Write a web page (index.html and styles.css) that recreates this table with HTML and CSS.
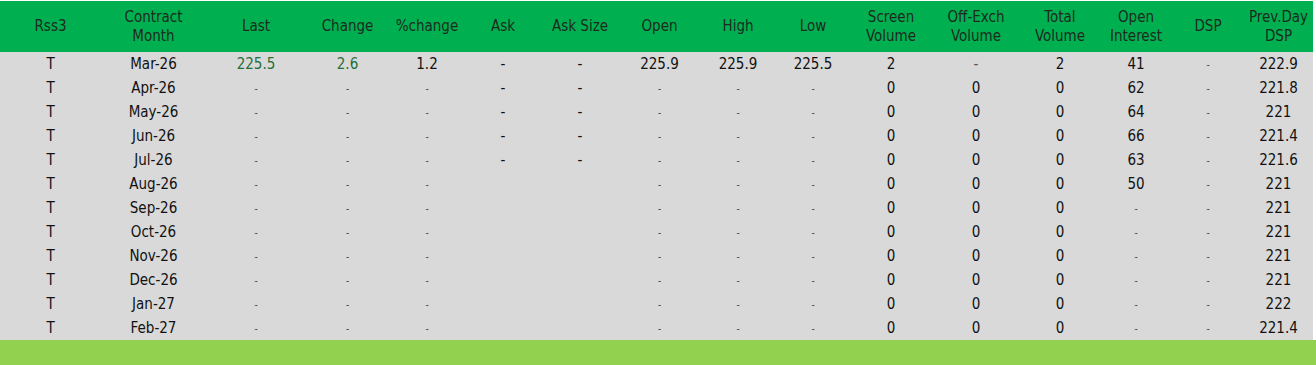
FILE: index.html
```html
<!DOCTYPE html>
<html>
<head>
<meta charset="utf-8">
<link rel="stylesheet" href="styles.css">
</head>
<body>
<div class="board">
<table class="quotes">
<colgroup>
<col style="width:101px"><col style="width:105px"><col style="width:100px"><col style="width:83px"><col style="width:76px"><col style="width:76px"><col style="width:78px"><col style="width:81px"><col style="width:76px"><col style="width:74px"><col style="width:82px"><col style="width:88px"><col style="width:80px"><col style="width:72px"><col style="width:72px"><col style="width:69px">
</colgroup>
<thead>
<tr>
<th>Rss3</th><th>Contract<br>Month</th><th>Last</th><th>Change</th><th>%change</th><th>Ask</th><th>Ask Size</th><th>Open</th><th>High</th><th>Low</th><th>Screen<br>Volume</th><th>Off-Exch<br>Volume</th><th>Total<br>Volume</th><th>Open<br>Interest</th><th>DSP</th><th>Prev.Day<br>DSP</th>
</tr>
</thead>
<tbody>
<tr><td>T</td><td>Mar-26</td><td class="up">225.5</td><td class="up">2.6</td><td>1.2</td><td>-</td><td>-</td><td>225.9</td><td>225.9</td><td>225.5</td><td>2</td><td class="dim">-</td><td>2</td><td>41</td><td><span class="nil">-</span></td><td>222.9</td></tr>
<tr><td>T</td><td>Apr-26</td><td><span class="nil">-</span></td><td><span class="nil">-</span></td><td><span class="nil">-</span></td><td>-</td><td>-</td><td><span class="nil">-</span></td><td><span class="nil">-</span></td><td><span class="nil">-</span></td><td>0</td><td>0</td><td>0</td><td>62</td><td><span class="nil">-</span></td><td>221.8</td></tr>
<tr><td>T</td><td>May-26</td><td><span class="nil">-</span></td><td><span class="nil">-</span></td><td><span class="nil">-</span></td><td>-</td><td>-</td><td><span class="nil">-</span></td><td><span class="nil">-</span></td><td><span class="nil">-</span></td><td>0</td><td>0</td><td>0</td><td>64</td><td><span class="nil">-</span></td><td>221</td></tr>
<tr><td>T</td><td>Jun-26</td><td><span class="nil">-</span></td><td><span class="nil">-</span></td><td><span class="nil">-</span></td><td>-</td><td>-</td><td><span class="nil">-</span></td><td><span class="nil">-</span></td><td><span class="nil">-</span></td><td>0</td><td>0</td><td>0</td><td>66</td><td><span class="nil">-</span></td><td>221.4</td></tr>
<tr><td>T</td><td>Jul-26</td><td><span class="nil">-</span></td><td><span class="nil">-</span></td><td><span class="nil">-</span></td><td>-</td><td>-</td><td><span class="nil">-</span></td><td><span class="nil">-</span></td><td><span class="nil">-</span></td><td>0</td><td>0</td><td>0</td><td>63</td><td><span class="nil">-</span></td><td>221.6</td></tr>
<tr><td>T</td><td>Aug-26</td><td><span class="nil">-</span></td><td><span class="nil">-</span></td><td><span class="nil">-</span></td><td></td><td></td><td><span class="nil">-</span></td><td><span class="nil">-</span></td><td><span class="nil">-</span></td><td>0</td><td>0</td><td>0</td><td>50</td><td><span class="nil">-</span></td><td>221</td></tr>
<tr><td>T</td><td>Sep-26</td><td><span class="nil">-</span></td><td><span class="nil">-</span></td><td><span class="nil">-</span></td><td></td><td></td><td><span class="nil">-</span></td><td><span class="nil">-</span></td><td><span class="nil">-</span></td><td>0</td><td>0</td><td>0</td><td><span class="nil">-</span></td><td><span class="nil">-</span></td><td>221</td></tr>
<tr><td>T</td><td>Oct-26</td><td><span class="nil">-</span></td><td><span class="nil">-</span></td><td><span class="nil">-</span></td><td></td><td></td><td><span class="nil">-</span></td><td><span class="nil">-</span></td><td><span class="nil">-</span></td><td>0</td><td>0</td><td>0</td><td><span class="nil">-</span></td><td><span class="nil">-</span></td><td>221</td></tr>
<tr><td>T</td><td>Nov-26</td><td><span class="nil">-</span></td><td><span class="nil">-</span></td><td><span class="nil">-</span></td><td></td><td></td><td><span class="nil">-</span></td><td><span class="nil">-</span></td><td><span class="nil">-</span></td><td>0</td><td>0</td><td>0</td><td><span class="nil">-</span></td><td><span class="nil">-</span></td><td>221</td></tr>
<tr><td>T</td><td>Dec-26</td><td><span class="nil">-</span></td><td><span class="nil">-</span></td><td><span class="nil">-</span></td><td></td><td></td><td><span class="nil">-</span></td><td><span class="nil">-</span></td><td><span class="nil">-</span></td><td>0</td><td>0</td><td>0</td><td><span class="nil">-</span></td><td><span class="nil">-</span></td><td>221</td></tr>
<tr><td>T</td><td>Jan-27</td><td><span class="nil">-</span></td><td><span class="nil">-</span></td><td><span class="nil">-</span></td><td></td><td></td><td><span class="nil">-</span></td><td><span class="nil">-</span></td><td><span class="nil">-</span></td><td>0</td><td>0</td><td>0</td><td><span class="nil">-</span></td><td><span class="nil">-</span></td><td>222</td></tr>
<tr><td>T</td><td>Feb-27</td><td><span class="nil">-</span></td><td><span class="nil">-</span></td><td><span class="nil">-</span></td><td></td><td></td><td><span class="nil">-</span></td><td><span class="nil">-</span></td><td><span class="nil">-</span></td><td>0</td><td>0</td><td>0</td><td><span class="nil">-</span></td><td><span class="nil">-</span></td><td>221.4</td></tr>
</tbody>
</table>
<div class="footer-bar"></div>
</div>
</body>
</html>
```

FILE: styles.css
```css
html, body {
  margin: 0;
  padding: 0;
  background: #ffffff;
}

.board {
  width: 1316px;
  padding-top: 1px;
  font-family: "DejaVu Sans Condensed", "DejaVu Sans", "Liberation Sans", sans-serif;
  font-stretch: condensed;
  font-size: 15px;
  color: #111111;
}

.quotes {
  width: 1313px;
  border-collapse: collapse;
  table-layout: fixed;
}

.quotes th {
  background: #00b050;
  color: #1c2a20;
  font-weight: normal;
  height: 51px;
  padding: 0;
  text-align: center;
  vertical-align: middle;
  line-height: 19px;
}

.quotes td {
  background: #d9d9d9;
  height: 24px;
  padding: 0;
  text-align: center;
  vertical-align: middle;
  line-height: 24px;
  white-space: nowrap;
}

.quotes td.up {
  color: #22703a;
}

.quotes td.dim {
  color: #555555;
}

.nil {
  display: inline-block;
  font-size: 10px;
  line-height: 10px;
  color: #444444;
  vertical-align: middle;
}

.footer-bar {
  height: 25px;
  background: #92d050;
}
```
